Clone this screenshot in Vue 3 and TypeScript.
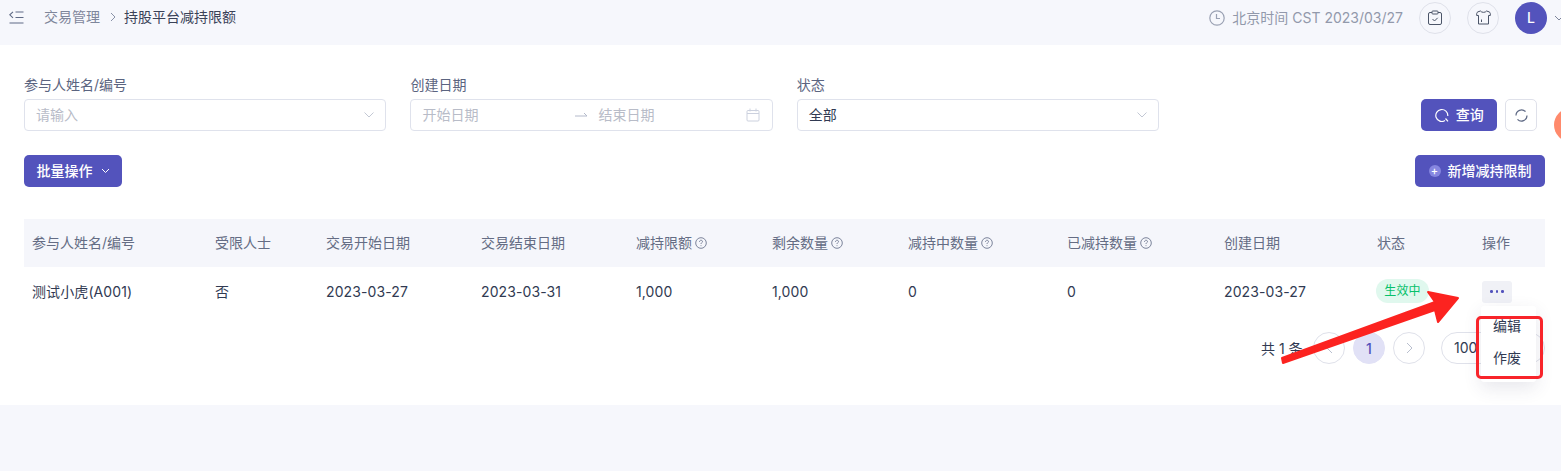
<script setup lang="ts">
interface Col { label: string; value: string; width: number; help?: boolean }
const cols: Col[] = [
  { label: '参与人姓名/编号', value: '测试小虎(A001)', width: 183 },
  { label: '受限人士', value: '否', width: 111 },
  { label: '交易开始日期', value: '2023-03-27', width: 155 },
  { label: '交易结束日期', value: '2023-03-31', width: 155 },
  { label: '减持限额', value: '1,000', width: 136, help: true },
  { label: '剩余数量', value: '1,000', width: 136, help: true },
  { label: '减持中数量', value: '0', width: 159, help: true },
  { label: '已减持数量', value: '0', width: 157, help: true },
  { label: '创建日期', value: '2023-03-27', width: 153 }
]
</script>

<template>
  <div class="page">
    <header class="topbar">
      <div class="crumbs">
        <svg class="collapse" width="15" height="13" viewBox="0 0 15 13" fill="none" stroke="#5f6a85" stroke-width="1.100">
          <path d="M4 .8 .8 3.800 4 6.800M6.500 1h8M6.500 6.500h8M.5 12h14" />
        </svg>
        <span class="crumb-parent">交易管理</span>
        <svg width="8" height="10" viewBox="0 0 8 10" fill="none" stroke="#8a92a8" stroke-width="1"><path d="m2 1 4 4-4 4" /></svg>
        <span class="crumb-current">持股平台减持限额</span>
      </div>
      <div class="top-right">
        <svg width="16" height="16" viewBox="0 0 16 16" fill="none" stroke="#9aa1b3" stroke-width="1.200"><circle cx="8" cy="8" r="7.200" /><path d="M7.500 4v4.500H11" /></svg>
        <span class="clock-text">北京时间 CST 2023/03/27</span>
        <span class="round-icon first">
          <svg width="14" height="15" viewBox="0 0 14 15" fill="none" stroke="#4b5468" stroke-width="1"><path d="M4 2.500H2A1.500 1.500 0 0 0 .5 4v9A1.500 1.500 0 0 0 2 14.500h10a1.500 1.500 0 0 0 1.500-1.500V4A1.500 1.500 0 0 0 12 2.500h-2" /><rect x="4" y="1" width="6" height="3" rx=".8" /><path d="m4.500 9 2 2 3.200-3.200" /></svg>
        </span>
        <span class="round-icon">
          <svg width="15" height="15" viewBox="0 0 15 15" fill="none" stroke="#4b5468" stroke-width="1"><path d="M4.500 1C5.500 2.800 9.500 2.800 10.500 1L13 1.800c.8.300 1.300 1 1.300 1.800V5.500H12.500v8.500h-10V5.500H.7V3.600c0-.8.500-1.500 1.300-1.800z" /><path d="M5.500 9.500v2.500" /></svg>
        </span>
        <span class="avatar">L</span>
        <svg class="avatar-caret" width="10" height="6" viewBox="0 0 10 6" fill="none" stroke="#7d859b" stroke-width="1"><path d="m1 1 4 4 4-4" /></svg>
      </div>
    </header>

    <main class="panel">
      <section class="filters">
        <div class="field">
          <label>参与人姓名/编号</label>
          <div class="control">
            <span class="placeholder">请输入</span>
            <svg class="caret" width="10" height="6" viewBox="0 0 10 6" fill="none" stroke="#c3c8d4" stroke-width="1"><path d="m.5.500 4.500 4.500L9.500.500" /></svg>
          </div>
        </div>
        <div class="field">
          <label>创建日期</label>
          <div class="control">
            <span class="placeholder date-text">开始日期</span>
            <svg class="range-arrow" width="13" height="6" viewBox="0 0 13 6" fill="none" stroke="#b4bacb" stroke-width="1"><path d="M0 4h12L9 1" /></svg>
            <span class="placeholder date-end">结束日期</span>
            <svg class="calendar" width="14" height="14" viewBox="0 0 14 14" fill="none" stroke="#ccd1de" stroke-width="1"><rect x="1" y="2.500" width="12" height="10.500" rx="1" /><path d="M1 5.500h12M4 .500v3M10 .500v3" /></svg>
          </div>
        </div>
        <div class="field">
          <label>状态</label>
          <div class="control">
            <span class="value">全部</span>
            <svg class="caret" width="10" height="6" viewBox="0 0 10 6" fill="none" stroke="#c3c8d4" stroke-width="1"><path d="m.5.500 4.500 4.500L9.500.500" /></svg>
          </div>
        </div>
        <div class="filter-actions">
          <button class="btn query">
            <svg width="14" height="14" viewBox="0 0 14 14" fill="none" stroke="#fff" stroke-width="1.200"><path d="M10 12.600A6 6 0 1 1 12.800 8" /><path d="m10.500 10.500 2.500 2.800" /></svg>
            <span class="btn-text">查询</span>
          </button>
          <button class="btn-refresh">
            <svg width="13" height="13" viewBox="0 0 13 13" fill="none" stroke="#5f6a85" stroke-width="1.200"><path d="M1 6.500A5.500 5.500 0 0 1 10.500 2.700M12 6.500A5.500 5.500 0 0 1 2.500 10.300" /></svg>
          </button>
        </div>
      </section>

      <section class="toolbar">
        <button class="btn batch">
          <span class="btn-text">批量操作</span>
          <svg width="9" height="6" viewBox="0 0 9 6" fill="none" stroke="#fff" stroke-width="1"><path d="m1 1 3.500 3.500L8 1" /></svg>
        </button>
        <button class="btn add">
          <span class="plus">+</span>
          <span class="btn-text">新增减持限制</span>
        </button>
      </section>

      <section class="table">
        <div class="thead">
          <div v-for="c in cols" :key="c.label" class="cell" :style="{ width: c.width + 'px' }">
            <span>{{ c.label }}</span>
            <svg v-if="c.help" class="help" width="12" height="12" viewBox="0 0 12 12" fill="none" stroke="#6e7790" stroke-width=".9"><circle cx="6" cy="6" r="5.300" /><path d="M4.500 4.800c0-2 3-2 3-.2 0 1-1.500 1.100-1.500 2.400M6 8.300v.8" /></svg>
          </div>
          <div class="cell status-col">状态</div>
          <div class="cell op-col">操作</div>
        </div>
        <div class="tbody">
          <div v-for="c in cols" :key="c.label" class="cell" :style="{ width: c.width + 'px' }">{{ c.value }}</div>
          <div class="cell status-col"><span class="tag">生效中</span></div>
          <div class="cell op-col"><span class="more"><i></i><i></i><i></i></span></div>
        </div>
      </section>

      <section class="pager">
        <span class="total">共 1 条</span>
        <span class="page-btn">
          <svg width="7" height="12" viewBox="0 0 7 12" fill="none" stroke="#b9bfce" stroke-width="1"><path d="M6 1 1 6l5 5" /></svg>
        </span>
        <span class="page-btn active">1</span>
        <span class="page-btn">
          <svg width="7" height="12" viewBox="0 0 7 12" fill="none" stroke="#b9bfce" stroke-width="1"><path d="m1 1 5 5-5 5" /></svg>
        </span>
        <span class="size">100</span>
      </section>
    </main>

    <div class="orange-dot"></div>
    <div class="menu">
      <span>编辑</span>
      <span>作废</span>
    </div>
    <div class="mark-box"></div>
    <svg class="arrow" width="190" height="80" viewBox="0 0 190 80">
      <path d="M2 71 155 15 148 5 178 11 158 35 155 23 3 76Z" fill="#fc2320" stroke="#fc2320" stroke-linejoin="round" stroke-width="2" />
    </svg>
  </div>
</template>

<style>
html, body { margin: 0; background: #f6f7fc; overflow: hidden; }
</style>

<style scoped>
.page {
  position: relative;
  width: 1561px;
  height: 471px;
  background: #f6f7fc;
  font-family: Inter, "Noto Sans CJK SC", sans-serif;
  font-size: 14px;
  color: #313a52;
  overflow: hidden;
}
.topbar { height: 45px; box-sizing: border-box; padding: 0 0 11px 9px; display: flex; justify-content: space-between; align-items: center; }
.crumbs { display: flex; align-items: center; font-size: 14px; line-height: 18px; }
.collapse { margin-right: 20px; }
.crumb-parent { color: #7e869b; margin-right: 9px; }
.crumb-current { color: #3a4258; margin-left: 7px; }
.top-right { display: flex; align-items: center; margin-top: 1px; }
.clock-text { color: #9299ab; font-size: 14px; line-height: 18px; margin: 0 0 0 7px; }
.round-icon { width: 32px; height: 32px; border: 1px solid #dfe1ea; border-radius: 50%; box-sizing: border-box; display: flex; align-items: center; justify-content: center; margin-left: 16px; }
.avatar { width: 32px; height: 32px; margin-left: 16px; border-radius: 50%; background: #5353bc; color: #fff; display: flex; align-items: center; justify-content: center; font-size: 14px; font-weight: 500; }
.avatar-caret { margin: 0 -3px 0 7px; }

.panel { background: #fff; height: 360px; padding: 0 16px 0 24px; box-sizing: border-box; }
.filters { display: flex; padding-top: 31px; }
.field { width: 362.400px; margin-right: 24px; flex: none; }
.field label { display: block; font-size: 14px; line-height: 18px; color: #5b6480; margin-bottom: 5px; }
.control { height: 32px; border: 1px solid #dfe2ec; border-radius: 4px; box-sizing: border-box; padding: 0 11px; display: flex; align-items: center; justify-content: space-between; line-height: 18px; }
.placeholder { color: #b8bcc8; font-size: 14px; margin-bottom: 1px; }
.value { color: #313a52; font-size: 14px; margin-bottom: 1px; }
.date-text { width: 153px; }
.range-arrow { margin-right: 10px; }
.date-end { flex: 1; }
.calendar { margin-right: 1px; }
.filter-actions { display: flex; align-items: flex-end; gap: 8px; margin-left: 238px; }
.btn { border: 0; background: #5353bc; color: #fff; border-radius: 5px; height: 32px; font: inherit; font-size: 14px; font-weight: 500; line-height: 18px; display: flex; align-items: center; justify-content: center; padding: 0; }
.btn-text { margin-bottom: 1px; }
.query { width: 76px; gap: 7px; }
.btn-refresh { width: 32px; height: 32px; border: 1px solid #dfe1ea; background: #fff; border-radius: 5px; display: flex; align-items: center; justify-content: center; padding: 0; }
.toolbar { display: flex; justify-content: space-between; margin-top: 24px; }
.batch { width: 98px; gap: 8px; }
.add { width: 130px; gap: 7px; }
.plus { width: 12px; height: 12px; border-radius: 50%; background: #8686e0; font-size: 11px; line-height: 12px; text-align: center; }

.table { margin-top: 32px; }
.thead, .tbody { display: flex; align-items: center; }
.thead { height: 48px; background: #f5f6fb; color: #646c84; font-size: 14px; line-height: 18px; padding-bottom: 1px; box-sizing: border-box; }
.tbody { height: 49px; color: #313a52; font-size: 14px; line-height: 18px; letter-spacing: .1px; }
.cell { box-sizing: border-box; padding-left: 8px; display: flex; align-items: center; flex: none; }
.help { margin-left: 3px; }
.status-col { width: 105px; }
.op-col { flex: 1; }
.tag { display: block; background: #e0f8ee; color: #06c16b; font-size: 12px; line-height: 24px; width: 53px; text-align: center; border-radius: 12px; margin-left: -1px; margin-bottom: 1px; }
.more { width: 30px; height: 22px; border-radius: 3px; background: #f0f1f6; display: flex; align-items: center; justify-content: center; gap: 3px; }
.more i { width: 2.500px; height: 2.500px; border-radius: 50%; background: #5353bc; }

.pager { display: flex; align-items: center; margin-top: 16px; padding-left: 1237px; position: relative; }
.total { width: 52px; font-size: 14px; }
.page-btn { width: 32px; height: 32px; box-sizing: border-box; border: 1px solid #dfe1ea; border-radius: 50%; margin-right: 8px; display: flex; align-items: center; justify-content: center; font-size: 14px; font-weight: 500; }
.page-btn.active { background: #e1e1f6; border-color: #e1e1f6; color: #5353bc; }
.size { width: 104px; height: 32px; margin-left: 8px; box-sizing: border-box; border: 1px solid #dfe1ea; border-radius: 16px; padding-left: 12px; line-height: 30px; font-size: 14px; }

.orange-dot { position: absolute; left: 1554px; top: 108px; width: 34px; height: 34px; border-radius: 50%; background: #ff8a6c; }
.menu { position: absolute; left: 1481px; top: 306px; width: 55px; height: 76px; background: #fff; border-radius: 3px; box-shadow: 0 6px 18px rgba(60, 60, 100, .12); display: flex; flex-direction: column; align-items: center; font-size: 14px; line-height: 18px; color: #313a52; gap: 14px; padding: 11px 3px 0 0; box-sizing: border-box; }
.mark-box { position: absolute; left: 1476px; top: 316px; width: 67px; height: 63px; box-sizing: border-box; border: 3px solid #f8242a; border-radius: 5px; }
.arrow { position: absolute; left: 1280px; top: 287px; }
</style>
